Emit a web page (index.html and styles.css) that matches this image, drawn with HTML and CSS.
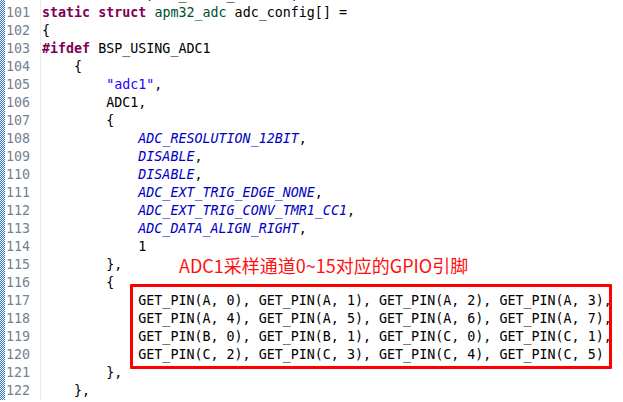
FILE: index.html
```html
<!DOCTYPE html>
<html>
<head>
<meta charset="utf-8">
<link rel="stylesheet" href="styles.css">
</head>
<body>
<div class="editor">
  <div class="stripe"></div>
  <div class="nums">
    <div>100</div><div>101</div><div>102</div><div>103</div><div>104</div><div>105</div><div>106</div><div>107</div><div>108</div><div>109</div><div>110</div><div>111</div><div>112</div><div>113</div><div>114</div><div>115</div><div>116</div><div>117</div><div>118</div><div>119</div><div>120</div><div>121</div><div>122</div>
  </div>
  <div class="sep"></div>
  <div class="code">
    <div class="ln">#define ADCMX, AB_CDEFG_HIJKLMN,</div>
    <div class="ln"><span class="kw">static</span> <span class="kw">struct</span> <span class="ty">apm32_adc</span> adc_config[] =</div>
    <div class="ln">{</div>
    <div class="ln"><span class="kw">#ifdef</span> BSP_USING_ADC1</div>
    <div class="ln">    {</div>
    <div class="ln">        <span class="str">"adc1"</span>,</div>
    <div class="ln">        ADC1,</div>
    <div class="ln">        {</div>
    <div class="ln">            <span class="mc">ADC_RESOLUTION_12BIT</span>,</div>
    <div class="ln">            <span class="mc">DISABLE</span>,</div>
    <div class="ln">            <span class="mc">DISABLE</span>,</div>
    <div class="ln">            <span class="mc">ADC_EXT_TRIG_EDGE_NONE</span>,</div>
    <div class="ln">            <span class="mc">ADC_EXT_TRIG_CONV_TMR1_CC1</span>,</div>
    <div class="ln">            <span class="mc">ADC_DATA_ALIGN_RIGHT</span>,</div>
    <div class="ln">            1</div>
    <div class="ln">        },</div>
    <div class="ln">        {</div>
    <div class="ln">            GET_PIN(A, 0), GET_PIN(A, 1), GET_PIN(A, 2), GET_PIN(A, 3),</div>
    <div class="ln">            GET_PIN(A, 4), GET_PIN(A, 5), GET_PIN(A, 6), GET_PIN(A, 7),</div>
    <div class="ln">            GET_PIN(B, 0), GET_PIN(B, 1), GET_PIN(C, 0), GET_PIN(C, 1),</div>
    <div class="ln">            GET_PIN(C, 2), GET_PIN(C, 3), GET_PIN(C, 4), GET_PIN(C, 5)</div>
    <div class="ln">        },</div>
    <div class="ln">    },</div>
  </div>
</div>
<div class="note">ADC1采样通道0~15对应的GPIO引脚</div>
<div class="box"></div>
</body>
</html>
```
FILE: styles.css
```css
html, body {
  margin: 0;
  padding: 0;
  background: #fff;
  width: 623px;
  height: 402px;
  overflow: hidden;
}
body {
  position: relative;
}
.editor {
  display: flex;
  margin-top: -14px;
  font-family: "DejaVu Sans Mono", monospace;
  font-size: 13.33px;
  line-height: 18px;
}
.stripe {
  width: 5px;
  flex: none;
  background: repeating-conic-gradient(#2e6fd3 0 25%, #ffffff 0 50%) 0 0 / 2px 2px;
}
.nums {
  width: 25px;
  flex: none;
  text-align: right;
  color: #76808f;
}
.sep {
  width: 1px;
  flex: none;
  margin-left: 10px;
  background: #ececec;
}
.code {
  padding-left: 1px;
  color: #000;
}
.ln {
  height: 18px;
  white-space: pre;
}
.kw {
  color: #7f0055;
  font-weight: bold;
}
.ty {
  color: #005032;
}
.str {
  color: #2a00ff;
}
.mc {
  color: #0000c0;
  font-style: italic;
}
.note {
  position: absolute;
  left: 179px;
  top: 254px;
  font-family: "Noto Sans CJK SC", sans-serif;
  font-size: 18px;
  line-height: 22px;
  color: #ff1010;
  white-space: nowrap;
}
.box {
  position: absolute;
  left: 130px;
  top: 284px;
  width: 476px;
  height: 79px;
  border: 3.5px solid #ff0000;
  border-radius: 1px;
}
```
